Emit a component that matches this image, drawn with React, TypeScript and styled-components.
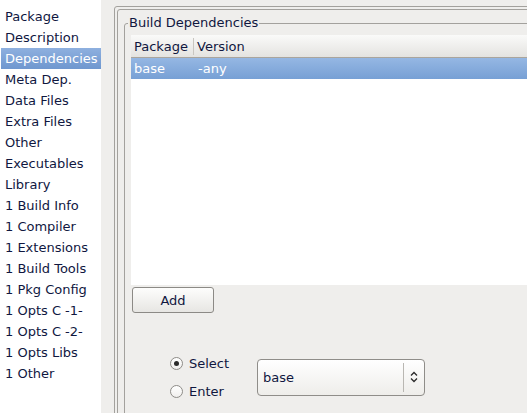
import React from "react";
import styled, { createGlobalStyle } from "styled-components";

const Global = createGlobalStyle`
  html, body { margin: 0; padding: 0; background: #efeeec; }
  body { font-family: "DejaVu Sans", Verdana, sans-serif; font-size: 13px; color: #10173f; }
  * { box-sizing: border-box; }
`;

const Root = styled.div`
  width: 527px;
  height: 413px;
  display: flex;
  overflow: hidden;
  background: #efeeec;
`;

const Sidebar = styled.ul`
  list-style: none;
  margin: 0;
  padding: 6px 0 0 1px;
  width: 101px;
  flex: none;
  background: #ffffff;
`;

const NavItem = styled.li<{ $active?: boolean }>`
  height: 21px;
  line-height: 21px;
  padding-left: 4px;
  white-space: nowrap;
  color: ${(p) => (p.$active ? "#ffffff" : "#10173f")};
  background: ${(p) => (p.$active ? "linear-gradient(#8eb0df, #6f97cf)" : "transparent")};
`;

const Main = styled.div`
  flex: none;
  padding: 6px 0 0 13px;
`;

const OuterFrame = styled.div`
  width: 460px;
  height: 430px;
  border: 1px solid #a3a19d;
  border-radius: 3px;
  padding: 2px;
`;

const InnerFrame = styled.div`
  height: 100%;
  border: 1px solid #a3a19d;
  border-radius: 3px;
  padding: 5px 0 0 6px;
`;

const Group = styled.fieldset`
  margin: 0;
  height: 420px;
  border: 1px solid #a3a19d;
  border-radius: 3px;
  padding: 4px 0 0 6px;
  min-width: 0;
`;

const Legend = styled.legend`
  margin-left: -3px;
  padding: 0 1px;
  height: 16px;
  line-height: 16px;
  color: #10173f;
`;

const Table = styled.div`
  width: 420px;
  height: 250px;
  background: #ffffff;
  display: flex;
  flex-direction: column;
`;

const HeaderRow = styled.div`
  display: flex;
  height: 23px;
  background: linear-gradient(#fafaf9, #e4e3e0);
  border-bottom: 1px solid #aaa59d;
  align-items: center;
`;

const HeaderCell = styled.div<{ $w?: number; $sep?: boolean }>`
  ${(p) => (p.$w ? `width: ${p.$w}px; flex: none;` : "flex: 1;")}
  padding-left: 3px;
  height: 17px;
  line-height: 17px;
  border-right: ${(p) => (p.$sep ? "1px solid #c9c6c0" : "none")};
`;

const DataRow = styled.div<{ $selected?: boolean }>`
  display: flex;
  height: 21px;
  line-height: 21px;
  color: ${(p) => (p.$selected ? "#ffffff" : "#10173f")};
  background: ${(p) => (p.$selected ? "linear-gradient(#95b7e3, #77a0d5)" : "transparent")};
`;

const DataCell = styled.div<{ $w?: number }>`
  ${(p) => (p.$w ? `width: ${p.$w}px; flex: none;` : "flex: 1;")}
  padding-left: 3px;
`;

const Button = styled.button`
  display: block;
  margin: 2px 0 0 1px;
  width: 82px;
  height: 26px;
  border: 1px solid #8c8a86;
  border-radius: 3px;
  background: linear-gradient(#fdfdfc, #e7e6e3);
  font: inherit;
  color: #10173f;
  padding: 0;
`;

const Chooser = styled.div`
  display: flex;
  align-items: center;
  margin: 36px 0 0 39px;
  gap: 28px;
`;

const RadioGroup = styled.div`
  display: flex;
  flex-direction: column;
`;

const RadioRow = styled.label`
  display: flex;
  align-items: center;
  height: 28px;
  gap: 6px;
`;

const RadioCircle = styled.span<{ $checked?: boolean }>`
  width: 13px;
  height: 13px;
  border-radius: 50%;
  border: 1px solid #8e8c88;
  background: linear-gradient(#ffffff, #f0efed);
  display: flex;
  align-items: center;
  justify-content: center;
  &::after {
    content: "";
    width: 5px;
    height: 5px;
    border-radius: 50%;
    background: ${(p) => (p.$checked ? "#2b2b2b" : "transparent")};
  }
`;

const Combo = styled.div`
  width: 168px;
  height: 37px;
  border: 1px solid #8f8d89;
  border-radius: 4px;
  background: linear-gradient(#ffffff, #eeedea);
  display: flex;
  align-items: center;
`;

const ComboText = styled.span`
  flex: 1;
  padding-left: 5px;
`;

const ComboSep = styled.span`
  width: 1px;
  height: 29px;
  background: #b9b7b2;
`;

const ComboArrow = styled.span`
  width: 20px;
  display: flex;
  justify-content: center;
`;

const items = [
  "Package",
  "Description",
  "Dependencies",
  "Meta Dep.",
  "Data Files",
  "Extra Files",
  "Other",
  "Executables",
  "Library",
  "1 Build Info",
  "1 Compiler",
  "1 Extensions",
  "1 Build Tools",
  "1 Pkg Config",
  "1 Opts C -1-",
  "1 Opts C -2-",
  "1 Opts Libs",
  "1 Other",
];

export default function App() {
  return (
    <Root>
      <Global />
      <Sidebar>
        {items.map((it) => (
          <NavItem key={it} $active={it === "Dependencies"}>
            {it}
          </NavItem>
        ))}
      </Sidebar>
      <Main>
        <OuterFrame>
          <InnerFrame>
            <Group>
              <Legend>Build Dependencies</Legend>
              <Table>
                <HeaderRow>
                  <HeaderCell $w={63} $sep>
                    Package
                  </HeaderCell>
                  <HeaderCell>Version</HeaderCell>
                </HeaderRow>
                <DataRow $selected>
                  <DataCell $w={64}>base</DataCell>
                  <DataCell>-any</DataCell>
                </DataRow>
              </Table>
              <Button>Add</Button>
              <Chooser>
                <RadioGroup>
                  <RadioRow>
                    <RadioCircle $checked />
                    Select
                  </RadioRow>
                  <RadioRow>
                    <RadioCircle />
                    Enter
                  </RadioRow>
                </RadioGroup>
                <Combo>
                  <ComboText>base</ComboText>
                  <ComboSep />
                  <ComboArrow>
                    <svg width="8" height="12" viewBox="0 0 8 12">
                      <path d="M1 4.5 L4 1.5 L7 4.5 M1 7.5 L4 10.5 L7 7.5" fill="none" stroke="#2a2a2a" strokeWidth="1.3" />
                    </svg>
                  </ComboArrow>
                </Combo>
              </Chooser>
            </Group>
          </InnerFrame>
        </OuterFrame>
      </Main>
    </Root>
  );
}
